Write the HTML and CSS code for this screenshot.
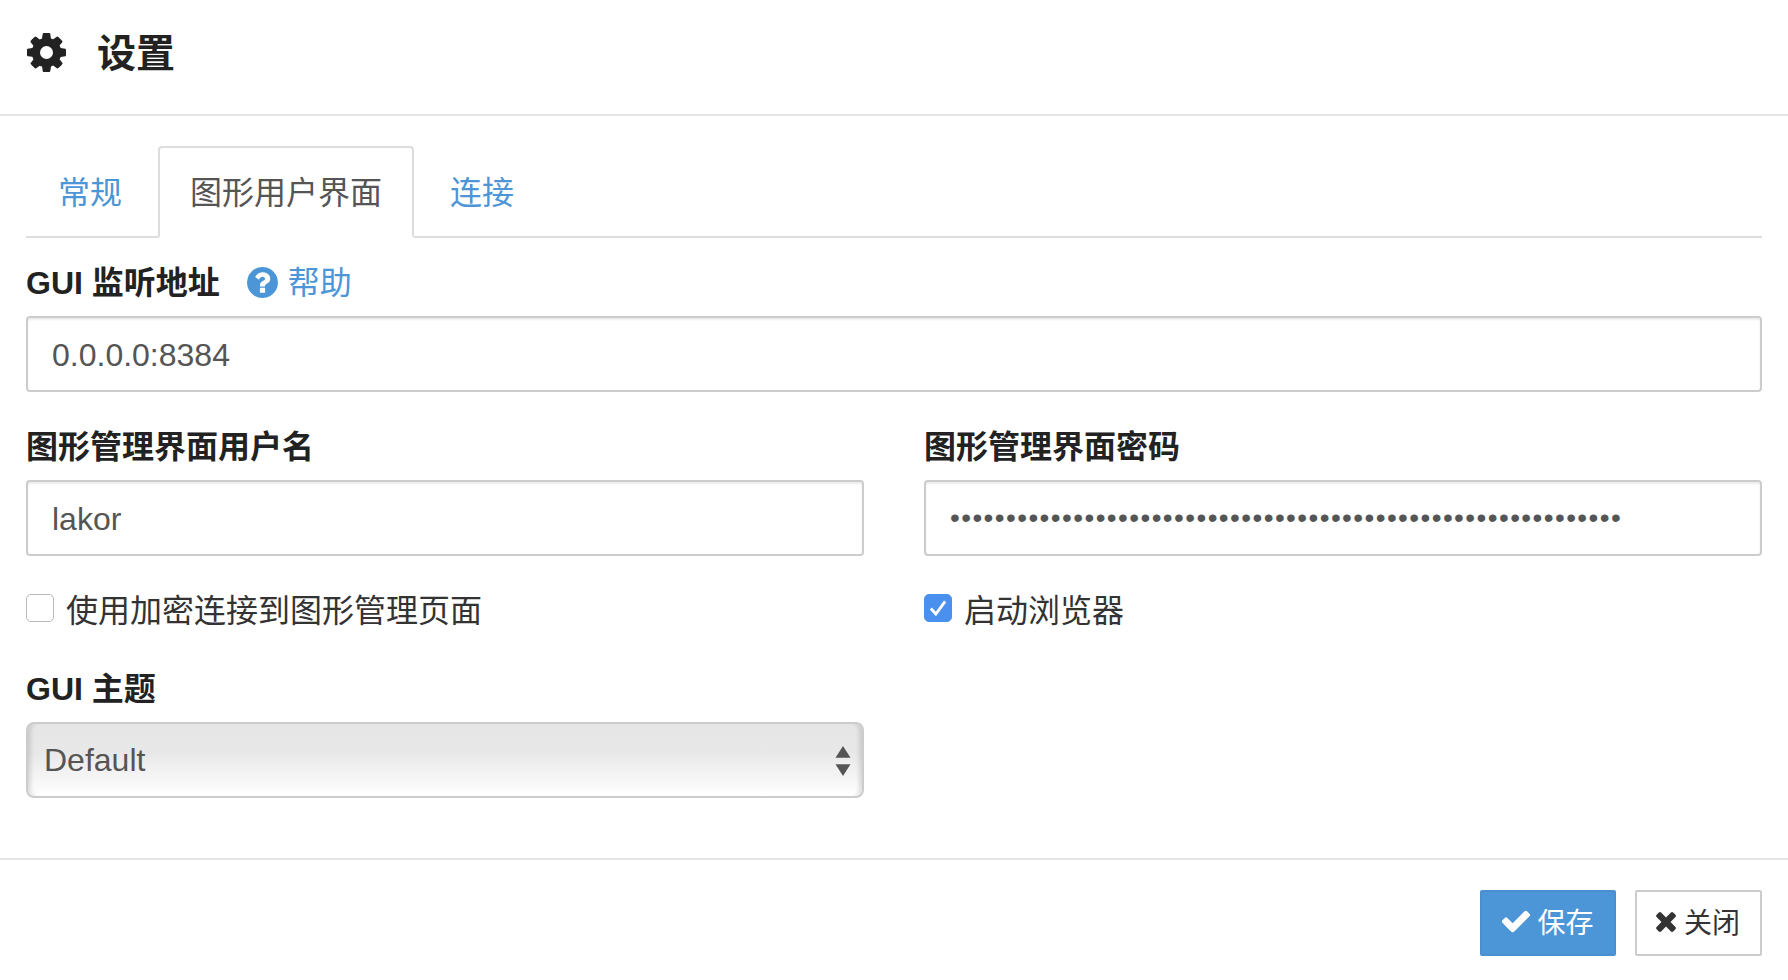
FILE: index.html
```html
<!DOCTYPE html>
<html lang="zh-CN">
<head>
<meta charset="utf-8">
<title>设置</title>
<link rel="stylesheet" href="styles.css">
</head>
<body>
<header class="head">
  <svg class="gear" viewBox="128 128 1536 1536"><path fill-rule="evenodd" d="M1152 896q0-106-75-181t-181-75-181 75-75 181 75 181 181 75 181-75 75-181zm512-109v222q0 12-8 23t-20 13l-185 28q-19 54-39 91 35 50 107 138 10 12 10 25t-9 23q-27 37-99 108t-94 71q-12 0-26-9l-138-108q-44 23-91 38-16 136-29 186-7 28-36 28h-222q-14 0-24.5-8.5t-11.5-21.5l-28-184q-49-16-90-37l-141 107q-10 9-25 9-14 0-25-11-126-114-165-168-7-10-7-23 0-12 8-23 15-21 51-66.5t54-70.5q-27-50-41-99l-183-27q-13-2-21-12.5t-8-23.5v-222q0-12 8-23t19-13l186-28q14-46 39-92-40-57-107-138-10-12-10-24 0-10 9-23 26-36 98.5-107.5t94.5-71.5q13 0 26 10l138 107q44-23 91-38 16-136 29-186 7-28 36-28h222q14 0 24.5 8.5t11.5 21.5l28 184q49 16 90 37l142-107q9-9 24-9 13 0 25 10 129 119 165 170 7 8 7 22 0 12-8 23-15 21-51 66.5t-54 70.5q26 50 41 98l183 28q13 2 21 12.5t8 23.5z"/></svg>
  <h1 class="title">设置</h1>
</header>
<main class="body">
  <nav class="tabs">
    <a class="tab">常规</a>
    <a class="tab tab-active">图形用户界面</a>
    <a class="tab">连接</a>
  </nav>
  <div class="field-first">
    <div class="label-row">
      <label class="label">GUI 监听地址</label>
      <a class="help"><svg class="help-icon" viewBox="128 128 1536 1536"><path d="M1024 1376v-192q0-14-9-23t-23-9h-192q-14 0-23 9t-9 23v192q0 14 9 23t23 9h192q14 0 23-9t9-23zm256-672q0-88-55.5-163t-138.5-116-170-41q-243 0-371 213-15 24 8 42l132 100q7 6 19 6 16 0 25-12 53-68 86-92 34-24 86-24 48 0 85.5 26t37.5 59q0 38-20 61t-68 45q-63 28-115.5 86.5t-52.5 125.5v36q0 14 9 23t23 9h192q14 0 23-9t9-23q0-19 21.5-49.5t54.5-49.5q32-18 49-28.5t46-35 44.5-48 28-60.5 12.5-81zm384 192q0 209-103 385.5t-279.5 279.5-385.5 103-385.5-103-279.5-279.5-103-385.5 103-385.5 279.5-279.5 385.5-103 385.5 103 279.5 279.5 103 385.5z"/></svg>帮助</a>
    </div>
    <input class="input" type="text" value="0.0.0.0:8384">
  </div>
  <div class="cols cols-creds">
    <div>
      <div class="label-row"><label class="label">图形管理界面用户名</label></div>
      <input class="input" type="text" value="lakor">
    </div>
    <div>
      <div class="label-row"><label class="label">图形管理界面密码</label></div>
      <input class="input input-pass" type="password" value="xxxxxxxxxxxxxxxxxxxxxxxxxxxxxxxxxxxxxxxxxxxxxxxxxxxxxxxxxxxx">
    </div>
  </div>
  <div class="cols cols-checks">
    <div class="check-row"><span class="box"></span><span>使用加密连接到图形管理页面</span></div>
    <div class="check-row"><span class="box box-on"><svg class="tick" viewBox="0 0 20 20"><path d="M3.5 10.5l4.5 5L16.5 4"/></svg></span><span>启动浏览器</span></div>
  </div>
  <div class="cols cols-theme">
    <div>
      <div class="label-row"><label class="label">GUI 主题</label></div>
      <div class="select-wrap">
        <select class="select"><option>Default</option></select>
        <svg class="arrows" viewBox="0 0 14 28"><path d="M7 0l7 11H0zM0 17h14L7 28z"/></svg>
      </div>
    </div>
  </div>
</main>
<footer class="foot">
  <button class="btn btn-primary"><svg class="btn-icon" viewBox="128 256 1543 1280"><path d="M1671 566q0 40-28 68l-724 724-136 136q-28 28-68 28t-68-28l-136-136-362-362q-28-28-28-68t28-68l136-136q28-28 68-28t68 28l294 295 656-657q28-28 68-28t68 28l136 136q28 28 28 68z"/></svg>保存</button>
  <button class="btn btn-default"><svg class="btn-icon btn-icon-x" viewBox="300 240 1190 1320"><path d="M1490 1322q0 40-28 68l-136 136q-28 28-68 28t-68-28l-294-294-294 294q-28 28-68 28t-68-28l-136-136q-28-28-28-68t28-68l294-294-294-294q-28-28-28-68t28-68l136-136q28-28 68-28t68 28l294 294 294-294q28-28 68-28t68 28l136 136q28 28 28 68t-28 68l-294 294 294 294q28 28 28 68z"/></svg>关闭</button>
</footer>
</body>
</html>
```
FILE: styles.css
```css
* { box-sizing: border-box; }
html, body { margin: 0; padding: 0; height: 100%; }
body {
  background: #fff;
  color: #333;
  font-family: "Liberation Sans", "Noto Sans CJK SC", sans-serif;
  font-size: 32px;
  overflow: hidden;
}
.head {
  display: flex;
  align-items: center;
  height: 116px;
  padding-left: 27px;
  padding-bottom: 10px;
  border-bottom: 2px solid #e5e5e5;
}
.gear { width: 39px; height: 39px; fill: #222; }
.title {
  margin: 4px 0 0 31px;
  font-size: 39px;
  font-weight: 700;
  color: #222;
  line-height: 44px;
}
.body { padding: 30px 26px 0; }
.tabs {
  display: flex;
  gap: 4px;
  height: 92px;
  border-bottom: 2px solid #ddd;
}
.tab {
  height: 92px;
  padding: 23px 30px 0;
  border: 2px solid transparent;
  border-radius: 4px 4px 0 0;
  color: #4c96d7;
  line-height: 44px;
}
.tab-active {
  color: #555;
  background: #fff;
  border-color: #ddd;
  border-bottom-color: #fff;
}
.field-first { margin-top: 20px; }
.label-row {
  display: flex;
  align-items: center;
  height: 44px;
  margin-bottom: 14px;
}
.label { font-weight: 700; color: #222; }
.help {
  display: flex;
  align-items: center;
  margin-left: 27px;
  color: #4c96d7;
}
.help-icon { width: 31px; height: 31px; margin: 4px 10px 0 0; fill: #4c96d7; }
.input {
  display: block;
  width: 100%;
  height: 76px;
  padding: 3px 24px 0;
  border: 2px solid #ccc;
  border-radius: 4px;
  background: #fff;
  color: #555;
  font: inherit;
  box-shadow: inset 0 2px 2px rgba(0, 0, 0, 0.075);
  outline: none;
}
.input-pass {
  padding-top: 0;
  font-size: 28px;
  letter-spacing: 1.4px;
}
.cols {
  display: grid;
  grid-template-columns: 838px 838px;
  column-gap: 60px;
}
.cols-creds { margin-top: 30px; }
.cols-checks { margin-top: 30px; }
.cols-theme { margin-top: 34px; }
.check-row {
  display: flex;
  align-items: center;
  height: 44px;
  color: #333;
}
.box {
  display: flex;
  align-items: center;
  justify-content: center;
  width: 28px;
  height: 28px;
  margin: 0 12px 0 0;
  border: 1px solid #bbb;
  border-radius: 5px;
  background: #fff;
}
.box-on { background: #4a90ee; border-color: #4a90ee; }
.tick {
  width: 22px;
  height: 22px;
  fill: none;
  stroke: #fff;
  stroke-width: 2.6;
}
.select-wrap { position: relative; }
.select {
  display: block;
  width: 100%;
  height: 76px;
  padding: 0 0 0 16px;
  border: 2px solid #ccc;
  border-radius: 8px;
  appearance: none;
  color: #555;
  font: inherit;
  outline: none;
  background: linear-gradient(#e6e6e6 0%, #e8e8e8 40%, #fff 100%);
  box-shadow: inset 6px 0 4px -3px rgba(0, 0, 0, 0.12), inset -6px 0 4px -3px rgba(0, 0, 0, 0.12);
}
.arrows {
  position: absolute;
  right: 13px;
  top: 24px;
  width: 16px;
  height: 30px;
  fill: #555;
  pointer-events: none;
}
.foot {
  display: flex;
  justify-content: flex-end;
  gap: 19px;
  margin-top: 60px;
  padding: 30px 26px 0;
  border-top: 2px solid #e5e5e5;
}
.btn {
  display: flex;
  align-items: center;
  justify-content: center;
  height: 66px;
  padding: 0 0 4px;
  border-radius: 2px;
  font-family: inherit;
  font-size: 28px;
}
.btn-primary {
  width: 136px;
  background: #4c96d7;
  border: 2px solid #4a8fcf;
  color: #fff;
}
.btn-default {
  width: 127px;
  background: #fff;
  border: 2px solid #ccc;
  color: #333;
}
.btn-icon { width: 28px; height: 24px; margin-right: 7px; fill: #fff; }
.btn-icon-x { width: 20px; height: 22px; margin-left: -1px; margin-right: 8px; fill: #333; }
```
